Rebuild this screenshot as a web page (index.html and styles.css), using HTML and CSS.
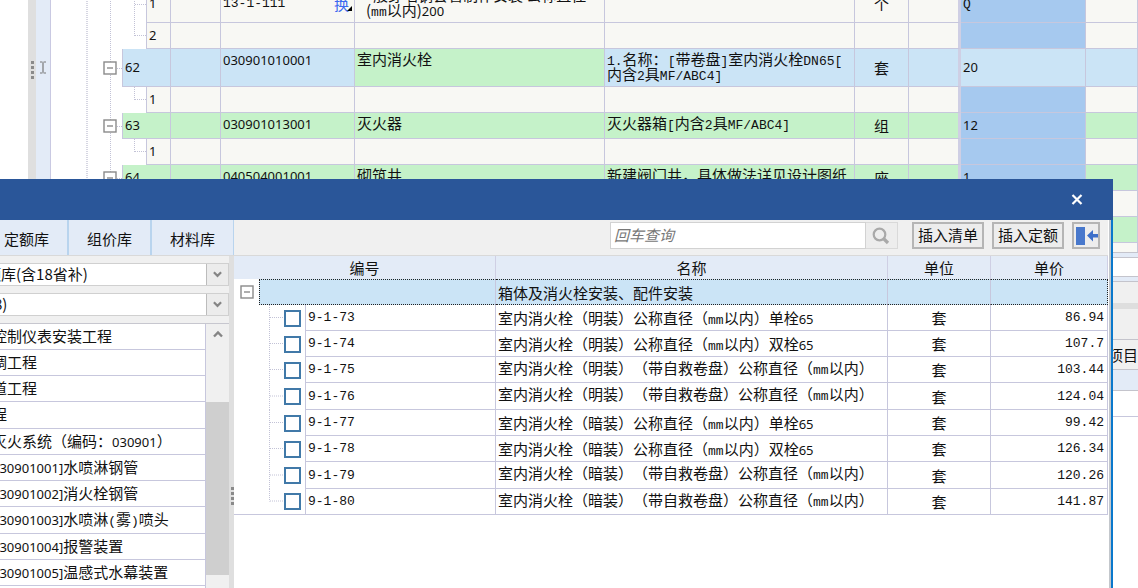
FILE: index.html
```html
<!DOCTYPE html>
<html lang="zh-CN">
<head>
<meta charset="utf-8">
<title>插入清单定额</title>
<link rel="stylesheet" href="styles.css">
</head>
<body>
<svg width="0" height="0" class="defs" aria-hidden="true">
  <symbol id="tree-main">
    <line class="dots wide" x1="36" y1="0" x2="36" y2="100%"/>
    <line class="dots" x1="59.5" y1="0" x2="59.5" y2="100%"/>
    <svg y="50%" overflow="visible"><line class="dots" x1="66" y1=".5" x2="72" y2=".5"/></svg>
  </symbol>
  <symbol id="tree-last">
    <line class="dots wide" x1="36" y1="0" x2="36" y2="100%"/>
    <line class="dots" x1="59.5" y1="0" x2="59.5" y2="100%"/>
    <line class="dots" x1="83.5" y1="0" x2="83.5" y2="50%"/>
    <svg y="50%" overflow="visible"><line class="dots" x1="84" y1="-.5" x2="96" y2="-.5"/></svg>
  </symbol>
  <symbol id="tree-mid">
    <line class="dots wide" x1="36" y1="0" x2="36" y2="100%"/>
    <line class="dots" x1="59.5" y1="0" x2="59.5" y2="100%"/>
    <line class="dots" x1="83.5" y1="0" x2="83.5" y2="100%"/>
    <svg y="50%" overflow="visible"><line class="dots" x1="84" y1=".5" x2="96" y2=".5"/></svg>
  </symbol>
  <symbol id="leaf-mid">
    <line class="dots" x1="10.5" y1="0" x2="10.5" y2="100%"/>
    <svg y="50%" overflow="visible"><line class="dots" x1="11" y1="-.5" x2="24" y2="-.5"/></svg>
  </symbol>
  <symbol id="leaf-last">
    <line class="dots" x1="10.5" y1="0" x2="10.5" y2="50%"/>
    <svg y="50%" overflow="visible"><line class="dots" x1="11" y1="-.5" x2="24" y2="-.5"/></svg>
  </symbol>
  <symbol id="minus" viewBox="0 0 14 14">
    <rect x="1" y="1" width="12" height="12" fill="#fff" stroke="#8a8a8a" stroke-width="1.4"/>
    <path d="M4 7h6" stroke="#777" stroke-width="1.2"/>
  </symbol>
  <symbol id="chev-down" viewBox="0 0 10 8"><path d="M1 1.5l4 4 4-4" fill="none" stroke="#858585" stroke-width="2.4"/></symbol>
  <symbol id="chev-up" viewBox="0 0 10 8"><path d="M1 6.5l4-4 4 4" fill="none" stroke="#858585" stroke-width="2.4"/></symbol>
</svg>

<main class="app">
  <section class="upper">
    <div class="margin"></div>
    <div class="splitter upper-splitter"><i class="grip"></i></div>
    <div class="strip"><svg width="8" height="13" viewBox="0 0 8 13"><path d="M1 1h2.5M4.500 1H7M4 1.500v10M1 12h2.500M4.500 12H7" fill="none" stroke="#777" stroke-width="1.2"/></svg></div>
    <div class="sheet">
      <table class="bill">
        <colgroup><col class="b-tree"><col class="b-indent"><col class="b-no"><col class="b-type"><col class="b-code"><col class="b-name"><col class="b-desc"><col class="b-unit"><col class="b-mark"><col class="b-qty"><col></colgroup>
        <tbody>
          <tr class="tall"><td class="tree" colspan="2"><svg class="lines"><use href="#tree-mid"/></svg></td><td class="no">1</td><td></td><td class="mid"><span class="swap"><span class="m">13-1-111</span><b class="huan">换<svg width="5" height="5" viewBox="0 0 5 5"><path d="M5 0v5H0z"/></svg></b></span></td><td class="indent">一般穿墙钢套管制作安装 公称直径<br><span class="second">(<span class="m">mm</span>以内)<span class="n">200</span></span></td><td></td><td class="unit">个</td><td class="mark"></td><td class="qty"><span class="m">Q</span></td><td></td></tr>
          <tr><td class="tree" colspan="2"><svg class="lines"><use href="#tree-last"/></svg></td><td class="no">2</td><td></td><td></td><td></td><td></td><td></td><td class="mark"></td><td class="qty"></td><td></td></tr>
          <tr class="tall current"><td class="tree"><svg class="lines"><use href="#tree-main"/></svg><button class="toggle" aria-label="折叠 62"><svg><use href="#minus"/></svg></button></td><td class="no" colspan="2">62</td><td></td><td><span class="n">030901010001</span></td><td class="green">室内消火栓</td><td><span class="m">1.</span>名称：<span class="m">[</span>带卷盘<span class="m">]</span>室内消火栓<span class="m">DN65[</span><br>内含<span class="m">2</span>具<span class="m">MF/ABC4]</span></td><td class="unit">套</td><td class="mark"></td><td class="qty">20</td><td></td></tr>
          <tr><td class="tree" colspan="2"><svg class="lines"><use href="#tree-last"/></svg></td><td class="no">1</td><td></td><td></td><td></td><td></td><td></td><td class="mark"></td><td class="qty"></td><td></td></tr>
          <tr class="item"><td class="tree"><svg class="lines"><use href="#tree-main"/></svg><button class="toggle" aria-label="折叠 63"><svg><use href="#minus"/></svg></button></td><td class="no" colspan="2">63</td><td></td><td><span class="n">030901013001</span></td><td>灭火器</td><td>灭火器箱<span class="m">[</span>内含<span class="m">2</span>具<span class="m">MF/ABC4]</span></td><td class="unit">组</td><td class="mark"></td><td class="qty">12</td><td></td></tr>
          <tr><td class="tree" colspan="2"><svg class="lines"><use href="#tree-last"/></svg></td><td class="no">1</td><td></td><td></td><td></td><td></td><td></td><td class="mark"></td><td class="qty"></td><td></td></tr>
          <tr class="item"><td class="tree"><svg class="lines"><use href="#tree-main"/></svg><button class="toggle" aria-label="折叠 64"><svg><use href="#minus"/></svg></button></td><td class="no" colspan="2">64</td><td></td><td><span class="n">040504001001</span></td><td>砌筑井</td><td>新建阀门井，具体做法详见设计图纸</td><td class="unit">座</td><td class="mark"></td><td class="qty">1</td><td></td></tr>
          <tr><td class="tree" colspan="2"></td><td class="no"></td><td></td><td></td><td></td><td></td><td></td><td class="mark"></td><td class="qty"></td><td></td></tr>
          <tr class="item"><td class="tree"></td><td class="no" colspan="2"></td><td></td><td></td><td></td><td></td><td></td><td class="mark"></td><td class="qty"></td><td></td></tr>
          <tr><td class="tree" colspan="2"></td><td class="no"></td><td></td><td></td><td></td><td></td><td></td><td class="mark"></td><td class="qty"></td><td></td></tr>
        </tbody>
      </table>
    </div>
  </section>
  <section class="lower">
    <div class="lower-field"></div>
    <div class="lower-bar"></div>
    <div class="lower-gap"></div>
    <div class="lower-tabs"></div>
    <div class="lower-title">项目</div>
    <div class="lower-head"></div>
    <div class="lower-row"></div>
  </section>
</main>

<section class="dialog" role="dialog" aria-label="插入清单定额">
  <header class="titlebar">
    <button class="close" aria-label="关闭"><svg width="12" height="11" viewBox="0 0 12 11"><path d="M1.500 1l9 9M10.500 1l-9 9" stroke="#fff" stroke-width="2.200"/></svg></button>
  </header>
  <div class="content">
    <div class="toolbar">
      <nav class="tabs"><button>定额库</button><button>组价库</button><button>材料库</button></nav>
      <form class="tools">
        <div class="search">
          <input type="text" aria-label="查询" placeholder="回车查询">
          <button type="button" aria-label="搜索"><svg width="18" height="18" viewBox="0 0 18 18"><circle cx="7.500" cy="7.500" r="5.800" fill="none" stroke="#a9a9a9" stroke-width="2.200"/><path d="M11.500 11.500l4.500 4.500" stroke="#a9a9a9" stroke-width="3.200"/></svg></button>
        </div>
        <button type="button" class="btn">插入清单</button>
        <button type="button" class="btn">插入定额</button>
        <button type="button" class="btn dock" aria-label="收起"><svg width="23" height="20" viewBox="0 0 23 20"><path d="M1 1h9v18H1z" fill="#4878cc"/><path d="M12 9.500l6-5.500v4h5v3.500h-5v4z" fill="#3e70ca"/></svg></button>
      </form>
    </div>
    <div class="panes">
      <aside class="library">
        <div class="combo"><select aria-label="定额库"><option>额库(含18省补)</option></select><svg width="10" height="8"><use href="#chev-down"/></svg></div>
        <div class="combo"><select aria-label="专业"><option>8)</option></select><svg width="10" height="8"><use href="#chev-down"/></svg></div>
        <div class="chapters">
          <ul>
            <li>控制仪表安装工程</li>
            <li>调工程</li>
            <li>道工程</li>
            <li>程</li>
            <li>灭火系统（编码：<span class="n">030901</span>）</li>
            <li><span class="n">030901001]</span>水喷淋钢管</li>
            <li><span class="n">030901002]</span>消火栓钢管</li>
            <li><span class="n">030901003]</span>水喷淋<span class="m">(</span>雾<span class="m">)</span>喷头</li>
            <li><span class="n">030901004]</span>报警装置</li>
            <li><span class="n">030901005]</span>温感式水幕装置</li>
            <li></li>
          </ul>
          <div class="scroll"><svg width="10" height="8"><use href="#chev-up"/></svg><i class="thumb"></i></div>
        </div>
      </aside>
      <div class="splitter pane-splitter"><i class="grip"></i></div>
      <div class="result">
        <table class="quota">
          <colgroup><col class="q-box"><col class="q-check"><col class="q-code"><col><col class="q-unit"><col class="q-price"></colgroup>
          <thead><tr><th colspan="3">编号</th><th>名称</th><th>单位</th><th>单价</th></tr></thead>
          <tbody>
            <tr class="group"><td class="tree"><button class="toggle" aria-label="折叠"><svg><use href="#minus"/></svg></button></td><td colspan="2"></td><td>箱体及消火栓安装、配件安装</td><td></td><td></td></tr>
            <tr><td class="tree"></td><td class="tree"><svg class="lines"><use href="#leaf-mid"/></svg><input type="checkbox" aria-label="9-1-73"></td><td class="m">9-1-73</td><td>室内消火栓（明装）公称直径（<span class="m">mm</span>以内）单栓<span class="n">65</span></td><td>套</td><td class="m">86.94</td></tr>
            <tr><td class="tree"></td><td class="tree"><svg class="lines"><use href="#leaf-mid"/></svg><input type="checkbox" aria-label="9-1-74"></td><td class="m">9-1-74</td><td>室内消火栓（明装）公称直径（<span class="m">mm</span>以内）双栓<span class="n">65</span></td><td>套</td><td class="m">107.7</td></tr>
            <tr><td class="tree"></td><td class="tree"><svg class="lines"><use href="#leaf-mid"/></svg><input type="checkbox" aria-label="9-1-75"></td><td class="m">9-1-75</td><td class="long">室内消火栓（明装）（带自救卷盘）公称直径（<span class="m">mm</span>以内）</td><td>套</td><td class="m">103.44</td></tr>
            <tr><td class="tree"></td><td class="tree"><svg class="lines"><use href="#leaf-mid"/></svg><input type="checkbox" aria-label="9-1-76"></td><td class="m">9-1-76</td><td class="long">室内消火栓（明装）（带自救卷盘）公称直径（<span class="m">mm</span>以内）</td><td>套</td><td class="m">124.04</td></tr>
            <tr><td class="tree"></td><td class="tree"><svg class="lines"><use href="#leaf-mid"/></svg><input type="checkbox" aria-label="9-1-77"></td><td class="m">9-1-77</td><td>室内消火栓（暗装）公称直径（<span class="m">mm</span>以内）单栓<span class="n">65</span></td><td>套</td><td class="m">99.42</td></tr>
            <tr><td class="tree"></td><td class="tree"><svg class="lines"><use href="#leaf-mid"/></svg><input type="checkbox" aria-label="9-1-78"></td><td class="m">9-1-78</td><td>室内消火栓（暗装）公称直径（<span class="m">mm</span>以内）双栓<span class="n">65</span></td><td>套</td><td class="m">126.34</td></tr>
            <tr><td class="tree"></td><td class="tree"><svg class="lines"><use href="#leaf-mid"/></svg><input type="checkbox" aria-label="9-1-79"></td><td class="m">9-1-79</td><td class="long">室内消火栓（暗装）（带自救卷盘）公称直径（<span class="m">mm</span>以内）</td><td>套</td><td class="m">120.26</td></tr>
            <tr class="last"><td class="tree"></td><td class="tree"><svg class="lines"><use href="#leaf-last"/></svg><input type="checkbox" aria-label="9-1-80"></td><td class="m">9-1-80</td><td class="long">室内消火栓（暗装）（带自救卷盘）公称直径（<span class="m">mm</span>以内）</td><td>套</td><td class="m">141.87</td></tr>
          </tbody>
        </table>
      </div>
    </div>
  </div>
</section>
</body>
</html>
```
FILE: styles.css
```css
* { box-sizing: border-box; }

body {
  margin: 0;
  height: 100vh;
  overflow: hidden;
  position: relative;
  background: #fff;
  color: #111;
  font: 15px/15px "Noto Sans CJK SC", sans-serif;
  text-spacing-trim: space-all;
}

button, input, select { font: inherit; color: inherit; }
button { padding: 0; border: 0; background: none; }

.defs { position: absolute; }
.n { font-family: "Noto Sans", sans-serif; font-size: 13px; }
.m { font-family: "Liberation Mono", monospace; font-size: 13px; }
span.n, span.m { line-height: 1px; }
.dots { stroke: #c2c2d6; stroke-width: 1; stroke-dasharray: 1 1; }
.wide { stroke-width: 2; stroke: #d6d6e2; }

table { width: 100%; table-layout: fixed; border-collapse: separate; border-spacing: 0; }
td, th { padding: 0; font-weight: 400; white-space: nowrap; overflow: hidden; }
.tree { position: relative; }
.lines { position: absolute; inset: 0; width: 100%; height: 100%; }
.toggle { position: relative; display: block; width: 14px; height: 14px; }
.toggle svg { display: block; width: 14px; height: 14px; }

/* bill of quantities */
.app { display: flex; flex-direction: column; height: 100%; }
.upper { display: flex; height: 252px; overflow: hidden; }
.margin { width: 28px; flex: none; }
.splitter { flex: none; width: 5px; background: #dfdfdf; display: flex; align-items: center; justify-content: flex-end; }
.grip { width: 3px; height: 18px; background: repeating-linear-gradient(#8a8a8a 0 3px, transparent 3px 5px); }
.upper-splitter { width: 8px; align-items: flex-start; padding-top: 61px; justify-content: center; }
.pane-splitter { align-items: flex-end; padding-bottom: 83px; }
.strip { flex: none; width: 15px; background: #e3ebf7; border-right: 1px solid #c9c9e2; padding: 61px 0 0 3px; }
.strip svg { display: block; }
.sheet { flex: 1; min-width: 0; margin-top: -15px; }

.b-tree { width: 72px; }
.b-indent, .b-no { width: 24px; }
.b-type { width: 50px; }
.b-code { width: 134px; }
.b-name, .b-desc { width: 250px; }
.b-unit { width: 54px; }
.b-mark { width: 52px; }
.b-qty { width: 125px; }

.bill tr { height: 26px; background: #f8f8f4; }
.bill tr.tall { height: 38px; }
.bill tr.item { background: #c5f2c9; }
.bill tr.current { background: #cbe4f6; }
.bill td { border-right: 1px solid #c7c7dd; border-bottom: 1px solid #c7c7dd; padding: 2px 2px 0; vertical-align: top; }
.bill td.tree { background: #fff; border-bottom: 0; padding: 0 5px 0 0; vertical-align: middle; }
.bill td.tree .toggle { margin-left: auto; }
.bill td.no, .bill td.unit, .bill td.qty, .bill td.mid { vertical-align: middle; padding-top: 0; }
.bill td.no, .bill td.qty { font-family: "Noto Sans", sans-serif; font-size: 13px; }
.bill td.unit { text-align: center; }
.bill td.mark { border-right: 3px solid #cfcfe4; }
.bill td.qty { background: #a6c9ef; }
.bill .current td.qty { background: #cbe4f6; }
.bill td.green { background: #c5f2c9; }
.bill td.indent { padding-left: 3px; }
.second { padding-left: 8px; }
.swap { display: flex; justify-content: space-between; align-items: center; }
.huan { display: flex; align-items: flex-end; color: #3a69f0; font-weight: 400; }
.huan svg { fill: #000; margin-left: -2px; }

.lower { flex: 1; background: #fff; }
.lower > div { border-top: 1px solid #c4c4cc; }
.lower-field { height: 29px; background: linear-gradient(#c4c4cc, #c4c4cc) 0 4px / 100% 1px no-repeat, linear-gradient(#fff, #fff) 0 5px / 100% 18px no-repeat, linear-gradient(#c4c4cc, #c4c4cc) 0 23px / 100% 1px no-repeat, #e3ebf7; }
.lower-bar { height: 22px; background: #f0f0f0; }
.lower .lower-gap { height: 6px; background: #dedede; border: 0; }
.lower .lower-tabs { height: 30px; background: #f0f0f0; border: 0; }
.lower-title { height: 30px; background: #f0f0f0; text-align: right; line-height: 29px; }
.lower-head { height: 21px; background: #e3ebf7; }
.lower-row { height: 27px; border-bottom: 1px solid #c7c7dd; }

/* dialog */
.dialog { position: absolute; left: 0; right: 25px; top: 179px; bottom: 0; display: flex; flex-direction: column; background: #fff; }
.titlebar { flex: none; height: 41px; background: #2a5699; display: flex; align-items: center; justify-content: flex-end; padding-right: 30px; }
.close svg { display: block; }
.content { flex: 1; min-height: 0; display: flex; flex-direction: column; border-right: 2px solid #0a78cc; box-shadow: inset -2px 0 #c3c7cc; padding-right: 3px; }
.toolbar { flex: none; height: 36px; display: flex; justify-content: space-between; background: #f0f0f0; border-bottom: 1px solid #d9d9d9; }
.tabs { display: flex; background: #e3ebf7; margin-left: -14px; }
.tabs button { width: 83px; border-right: 2px solid #b9d4ee; padding-top: 2px; }
.tabs button:last-child { width: 82px; border-right-width: 1px; }
.tools { display: flex; align-items: flex-start; gap: 8px; padding: 2px 8px 0 0; }
.search { display: flex; height: 27px; margin-right: 6px; }
.search input { width: 256px; border: 1px solid #d2d2d2; background: #fff; padding: 0 3px 3px; outline: 0; }
.search input::placeholder { color: #777; font-style: italic; opacity: 1; }
.search button { width: 32px; border: 1px solid #d9d9d9; border-left: 0; background: #ededed; display: grid; place-items: center; }
.btn { height: 27px; padding: 0 4px 2px; border: 2px solid #b5b5b5; background: #ededed; }
.dock { padding: 0; width: 28px; display: grid; place-items: center; }

.panes { flex: 1; min-height: 0; display: flex; }
.library { flex: none; width: 229px; background: #f0f0f0; display: flex; flex-direction: column; gap: 7px; padding-top: 7px; overflow: hidden; }
.combo { position: relative; flex: none; height: 23px; border: 1px solid #d0d0d0; border-left: 0; background: #fff; display: grid; grid-template-columns: 1fr 22px; }
.combo select { grid-row: 1; grid-column: 1 / 3; appearance: none; border: 0; background: transparent; padding: 0 0 2px; line-height: 19px; margin-left: -14px; min-width: 0; outline: 0; }
.combo:nth-child(2) select { margin-left: -6px; }
.combo svg { grid-row: 1; grid-column: 2; pointer-events: none; width: 22px; height: 21px; padding: 6px; background: #ececec; border-left: 1px solid #bcbcbc; }
.chapters { flex: 1; min-height: 0; display: flex; border-top: 1px solid #c7c7cf; }
.chapters ul { flex: 1; margin: 0; padding: 0; list-style: none; background: #fff; border-right: 1px solid #c7c7dd; overflow: hidden; }
.chapters li { height: 26px; border-bottom: 1px solid #c7c7dd; text-indent: -8px; line-height: 24px; white-space: nowrap; }
.chapters li:nth-child(4n) { height: 27px; }
.scroll { width: 23px; display: flex; flex-direction: column; align-items: stretch; background: #f0f0f0; }
.scroll svg { margin: 6px auto 64px; flex: none; }
.thumb { height: 173px; background: #cfcfcf; }

.result { flex: 1; min-width: 0; background: #fff; }
.q-box { width: 25px; }
.q-check { width: 47px; }
.q-code { width: 190px; }
.q-unit { width: 103px; }
.q-price { width: 117px; }
.quota th { height: 23px; background: #e3ebf7; border-right: 1px solid #cfcfe4; }
.quota tbody tr { height: 26px; }
.quota tbody tr:nth-child(3n+5) { height: 27px; }
.quota td { border-right: 1px solid #c7c7dd; border-bottom: 1px solid #c7c7dd; padding: 0 2px; }
.quota td.tree { border-bottom: 0; }
.quota td.tree:first-child { border-right: 0; }
.quota td:nth-child(5) { text-align: center; }
.quota td:nth-child(6) { text-align: right; padding-right: 3px; }
.quota td.long { vertical-align: top; padding-top: 3px; }
.quota .last td { border-bottom: 1px solid #c7c7dd; }
.quota .toggle { margin-left: 4px; }
.quota .group td:not(.tree) { background: #cbe4f6; border-top: 1px dotted #222; border-bottom: 1px dotted #222; text-align: left; }
.quota .group td:nth-child(2) { border-left: 1px dotted #222; }
.quota .group td:last-child { border-right: 1px dotted #222; }
.quota input { position: relative; display: block; appearance: none; width: 17px; height: 17px; margin: 0 0 0 23px; border: 2px solid #4179a8; background: #fff; }
.quota input:checked { background: #4179a8; }
```
